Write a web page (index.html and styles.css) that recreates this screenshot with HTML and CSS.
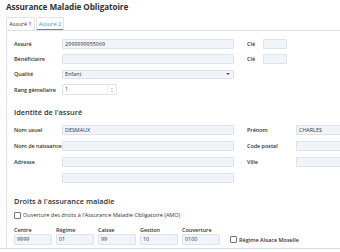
FILE: index.html
```html
<!DOCTYPE html>
<html lang="fr">
<head>
  <meta charset="UTF-8">
  <title>Assurance Maladie Obligatoire</title>
  <link rel="stylesheet" href="styles.css">
</head>
<body>
  <div class="page">
    <h1 class="title">Assurance Maladie Obligatoire</h1>

    <div class="tabs">
      <div class="tab">Assuré 1</div>
      <div class="tab active">Assuré 2</div>
    </div>

    <div class="panel">
      <!-- assuré / bénéficiaire -->
      <div class="grid-top">
        <label class="lbl">Assuré</label>
        <div class="field">2999999955069</div>
        <label class="lbl side">Clé</label>
        <div class="field"></div>

        <label class="lbl">Bénéficiaire</label>
        <div class="field"></div>
        <label class="lbl side">Clé</label>
        <div class="field"></div>

        <label class="lbl">Qualité</label>
        <div class="field select">Enfant<span class="caret"></span></div>
        <span></span><span></span>

        <label class="lbl">Rang gémellaire</label>
        <div class="field number">1
          <span class="spin"><i class="up"></i><i class="down"></i></span>
        </div>
      </div>

      <h2 class="section">Identité de l'assuré</h2>
      <div class="grid-id">
        <label class="lbl">Nom usuel</label>
        <div class="field">DESMAUX</div>
        <label class="lbl side">Prénom</label>
        <div class="field open">CHARLES</div>

        <label class="lbl">Nom de naissance</label>
        <div class="field"></div>
        <label class="lbl side">Code postal</label>
        <div class="field open"></div>

        <label class="lbl">Adresse</label>
        <div class="field"></div>
        <label class="lbl side">Ville</label>
        <div class="field open"></div>

        <span></span>
        <div class="field"></div>
      </div>

      <h2 class="section droits">Droits à l'assurance maladie</h2>
      <label class="check"><span class="box"></span>Ouverture des droits à l'Assurance Maladie Obligatoire (AMO)</label>

      <div class="codes">
        <div class="code"><span class="lbl">Centre</span><div class="field">9999</div></div>
        <div class="code"><span class="lbl">Régime</span><div class="field">01</div></div>
        <div class="code"><span class="lbl">Caisse</span><div class="field">99</div></div>
        <div class="code"><span class="lbl">Gestion</span><div class="field">10</div></div>
        <div class="code"><span class="lbl">Couverture</span><div class="field">0100</div></div>
        <label class="check alsace"><span class="box"></span>Régime Alsace Moselle</label>
      </div>
    </div>
  </div>
</body>
</html>
```

FILE: styles.css
```css
:root { --fg:#333; --line:#dfe3e8; --field:#f1f5fb; --fieldline:#dde3ea; --accent:#3d8fe0; }
body{margin:0;width:340px;height:252px;overflow:hidden;background:#fff;color:var(--fg);font-family:"Open Sans","Liberation Sans",sans-serif;}
.page{width:340px;height:249px;border-bottom:1px solid #d6d9dd;padding-left:6px;box-sizing:border-box;overflow:hidden;}
.title{margin:0;padding-top:1px;height:16px;font-size:8.2px;line-height:12px;font-weight:700;letter-spacing:-.1px;}

.tabs{display:flex;height:13px;border-bottom:1px solid var(--line);}
.tab{width:29px;box-sizing:border-box;border:1px solid var(--line);border-bottom:none;border-radius:2px 2px 0 0;font-size:5.6px;line-height:12px;text-align:center;background:#fff;}
.tab+.tab{margin-left:1px;width:28px;}
.tab.active{color:var(--accent);box-shadow:inset 0 -1px 0 var(--accent);}

.panel{border-left:1px solid var(--line);padding:8px 0 0 7px;height:218px;box-sizing:border-box;}

.lbl{font-size:5.5px;font-weight:600;line-height:10px;white-space:nowrap;letter-spacing:-.05px;}
.field{position:relative;box-sizing:border-box;height:10px;background:var(--field);border:1px solid var(--fieldline);border-radius:1px;font-size:5.4px;line-height:8px;padding-left:2px;white-space:nowrap;}
.field.open{border-right:none;border-radius:1px 0 0 1px;}

.grid-top{display:grid;grid-template-columns:48px 172px 29px 24px;row-gap:5px;align-items:center;}
.side{padding-left:13px;}
.select{height:9px;line-height:7px;}
.caret{position:absolute;right:3px;top:2px;border:2px solid transparent;border-top:2.5px solid #555;border-bottom:none;}
.number{width:55px;height:11px;line-height:9px;background:#fff;}
.spin{position:absolute;right:0;top:0;bottom:0;width:8px;display:flex;flex-direction:column;justify-content:center;gap:2px;align-items:center;border-left:1px solid #eef0f3;}
.spin i{display:block;border:1.5px solid transparent;}
.spin .up{border-bottom:1.5px solid #999;border-top:none;}
.spin .down{border-top:1.5px solid #999;border-bottom:none;}

.section{margin:12px 0 8px;font-size:7.4px;font-weight:600;line-height:10px;}
.grid-id{display:grid;grid-template-columns:48px 172px 62px 1fr;row-gap:6px;align-items:center;}

.droits{margin-top:13px;margin-bottom:4px;}
.check{display:flex;align-items:center;gap:2px;font-size:5.5px;line-height:10px;white-space:nowrap;}
.box{width:5px;height:5px;border:1px solid #777;border-radius:1px;background:#fff;}

.codes{display:flex;gap:4px;align-items:flex-end;margin-top:6px;}
.code{display:flex;flex-direction:column;width:38px;}
.code .lbl{line-height:8px;}
.code .field{height:11px;line-height:9px;}
.alsace{margin-left:6px;height:11px;font-weight:600;}
```
